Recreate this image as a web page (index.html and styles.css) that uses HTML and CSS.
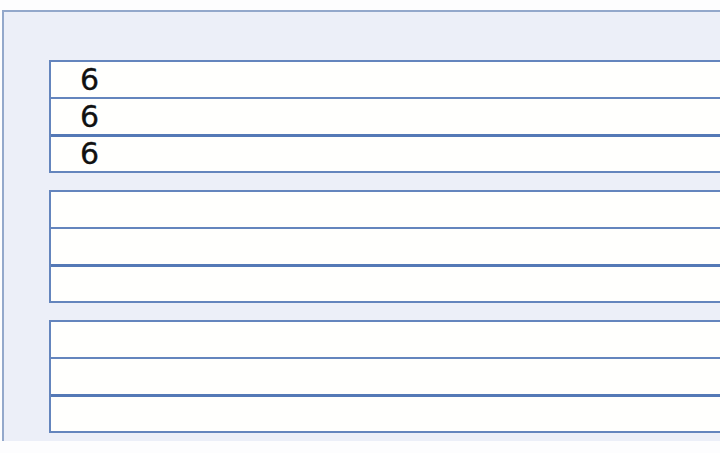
FILE: index.html
```html
<!DOCTYPE html>
<html>
<head>
<meta charset="utf-8">
<link rel="stylesheet" href="styles.css">
</head>
<body>
<div class="panel">
  <div class="group">
    <div class="row"><span class="num">6</span></div>
    <div class="row thick"><span class="num">6</span></div>
    <div class="row last"><span class="num">6</span></div>
  </div>
  <div class="group">
    <div class="row"></div>
    <div class="row thick"></div>
    <div class="row last"></div>
  </div>
  <div class="group">
    <div class="row"></div>
    <div class="row thick"></div>
    <div class="row last"></div>
  </div>
</div>
</body>
</html>
```
FILE: styles.css
```css
html, body {
  margin: 0;
  padding: 0;
  background: #fdfdfe;
  overflow: hidden;
  width: 720px;
  height: 453px;
}
.panel {
  margin-top: 10px;
  margin-left: 2px;
  height: 431px;
  box-sizing: border-box;
  border-top: 2px solid #93a8cb;
  border-left: 2px solid #93a8cb;
  background: #eceff8;
  padding: 48px 0 0 45px;
  display: flex;
  flex-direction: column;
  gap: 17px;
}
.group {
  background: #fffffd;
  border: 2px solid #6485bd;
  border-right: none;
}
.row {
  height: 35px;
  border-bottom: 2px solid #6485bd;
  display: flex;
  align-items: center;
  padding-left: 29px;
}
.row.thick {
  border-bottom: 3px solid #5479b6;
}
.row.last {
  border-bottom: none;
  height: 34px;
}
.num {
  font-family: "DejaVu Sans", sans-serif;
  font-size: 30px;
  color: #111;
  line-height: 1;
  -webkit-text-stroke: 0.3px #111;
}
```
